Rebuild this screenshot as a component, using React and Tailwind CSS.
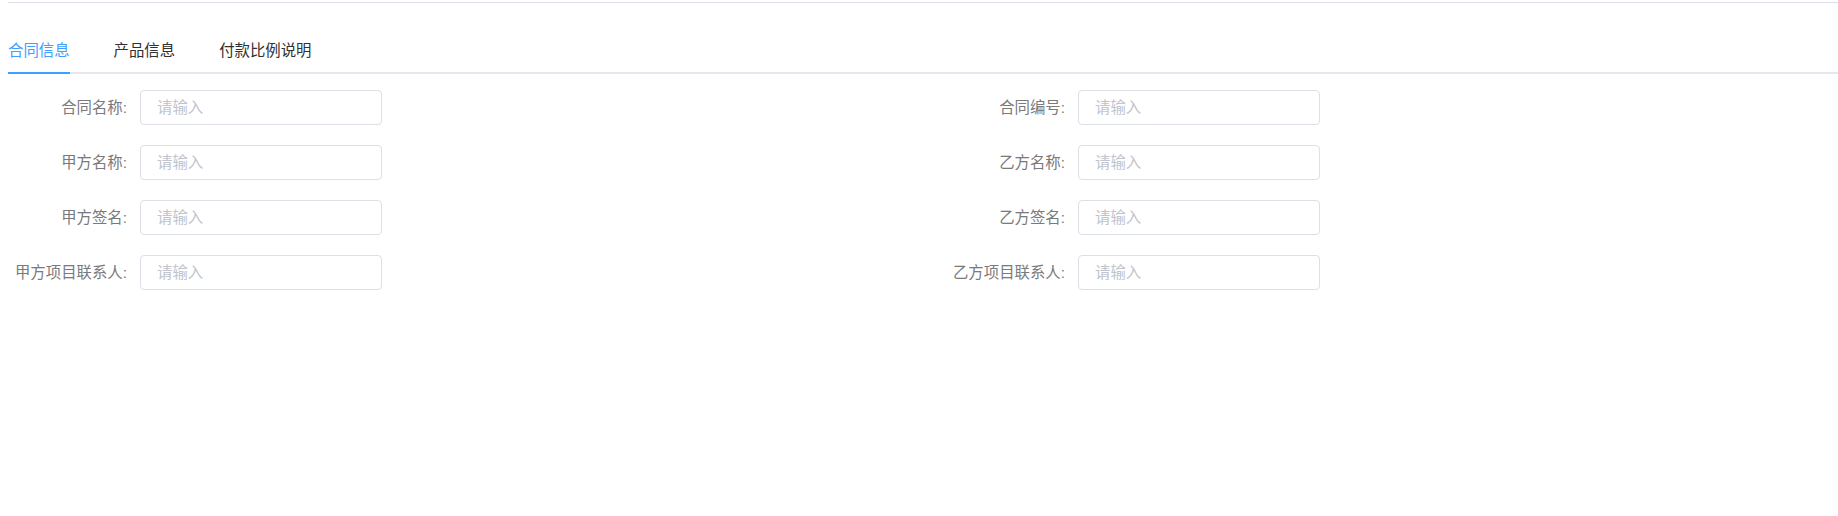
const tabs = ["合同信息", "产品信息", "付款比例说明"];

const rows = [
  ["合同名称", "合同编号"],
  ["甲方名称", "乙方名称"],
  ["甲方签名", "乙方签名"],
  ["甲方项目联系人", "乙方项目联系人"],
];

function Field({ label }) {
  return (
    <div className="flex items-center w-[938px] shrink-0">
      <label className="w-[132px] shrink-0 pr-[13px] text-right text-[15.4px] text-[#7a7a7a] leading-[35px] whitespace-nowrap">
        {label}:
      </label>
      <input
        type="text"
        placeholder="请输入"
        className="w-[242px] h-[35px] px-[16px] rounded-[4px] border border-[#dcdfe6] bg-white text-[15.4px] text-[#606266] placeholder:text-[#c0c4cc] outline-none"
      />
    </div>
  );
}

export default function App() {
  return (
    <div
      className="min-h-[516px] bg-white pl-2 overflow-hidden"
      style={{ fontFamily: '"Helvetica Neue", "Liberation Sans", "Noto Sans CJK SC", sans-serif' }}
    >
      <div className="pt-[2px]">
        <div className="h-px bg-[#dcdfe6]" />
      </div>

      {/* tabs */}
      <div className="mt-[27px] flex h-[44px] border-b-2 border-[#e4e7ed]">
        {tabs.map((t, i) => (
          <div
            key={t}
            className={
              "relative flex items-center text-[15.4px] " +
              (i === 0 ? "pr-[22px] text-[#409eff]" : "px-[22px] text-[#303133]")
            }
          >
            {t}
            {i === 0 && (
              <span className="absolute left-0 right-[22px] -bottom-[2px] h-[2px] bg-[#409eff]" />
            )}
          </div>
        ))}
      </div>

      {/* form */}
      <form className="mt-[16px] flex flex-col gap-[20px]">
        {rows.map(([a, b]) => (
          <div key={a} className="flex">
            <Field label={a} />
            <Field label={b} />
          </div>
        ))}
      </form>
    </div>
  );
}
